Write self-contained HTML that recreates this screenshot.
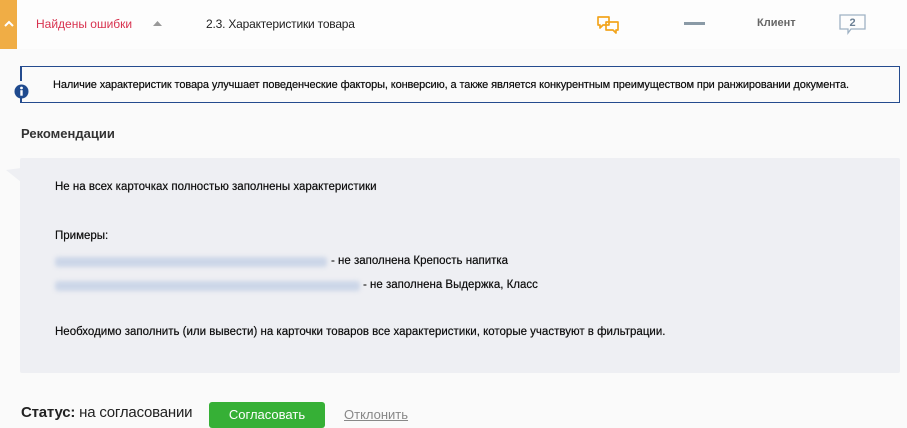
<!DOCTYPE html>
<html><head><meta charset="utf-8"><style>
*{margin:0;padding:0;box-sizing:border-box}
body{width:907px;height:426px;background:#fafafa;font-family:"Liberation Sans",sans-serif;position:relative;overflow:hidden;color:#222}
.a{position:absolute;white-space:nowrap}
.hdr{position:absolute;left:0;top:0;width:907px;height:49px;background:#fdfdfd}
.tab{position:absolute;left:0;top:0;width:17px;height:49px;background:#f0ad45}
.info{position:absolute;left:20px;top:66px;width:880px;height:37px;border:1.5px solid #244b8e;border-left:none}
.info:before{content:"";position:absolute;left:0;top:0;width:1.5px;height:14px;background:#244b8e}
.info:after{content:"";position:absolute;left:0;bottom:0;width:1.5px;height:4px;background:#244b8e}
.box{position:absolute;left:20px;top:158px;width:880px;height:215px;background:#eeeff3;border-radius:2px}
.blur{position:absolute;height:10px;background:#ccd6e8;filter:blur(2px);border-radius:3px}
.f13{font-size:11.5px;color:#111;text-shadow:0 0 0.4px #111}
</style></head><body>
<div class="hdr"></div>
<div class="tab"></div>
<svg class="a" style="left:4px;top:20px" width="10" height="8"><path d="M1 6 L5 2 L9 6" stroke="#fff" stroke-width="2" fill="none"/></svg>
<div class="a" style="left:36px;top:17px;font-size:12px;color:#d8324f">Найдены ошибки</div>
<svg class="a" style="left:153px;top:21px" width="9" height="6"><path d="M0 5 L4.5 0 L9 5Z" fill="#999"/></svg>
<div class="a" style="left:206px;top:17px;font-size:12px;color:#222;letter-spacing:-0.2px">2.3. Характеристики товара</div>
<svg class="a" style="left:597px;top:16px" width="24" height="19"><path d="M1 1 H12 V9 H6 L3 12 V9 H1Z M9 6 H21 V14 H19 V17 L16 14 H9Z" stroke="#f2a51e" stroke-width="1.7" fill="#fdfdfd" stroke-linejoin="round"/></svg>
<div class="a" style="left:684px;top:22px;width:21px;height:3px;background:#8a9aa6"></div>
<div class="a" style="left:757px;top:17px;font-size:11px;font-weight:bold;color:#666">Клиент</div>
<svg class="a" style="left:839px;top:14px" width="28" height="22"><path d="M1 1 H26 V15 H12 L9 19 V15 H1Z" stroke="#9fb2c4" stroke-width="1.3" fill="#fdfdfd"/><text x="13.5" y="12" text-anchor="middle" font-family="Liberation Sans" font-size="11" font-weight="bold" fill="#6a7f94">2</text></svg>
<div class="info"></div>
<svg class="a" style="left:14px;top:84px" width="15" height="15"><circle cx="7.5" cy="7.5" r="7" fill="#1f4a8e"/><circle cx="7.5" cy="4" r="1.4" fill="#fff"/><rect x="6.3" y="6.2" width="2.4" height="5.5" fill="#fff"/></svg>
<div class="a" style="left:53px;top:79px;font-size:11px;color:#111;letter-spacing:-0.12px;text-shadow:0 0 0.4px #111">Наличие характеристик товара улучшает поведенческие факторы, конверсию, а также является конкурентным преимуществом при ранжировании документа.</div>
<div class="a" style="left:21px;top:126px;font-size:13px;font-weight:bold;color:#333">Рекомендации</div>
<svg class="a" style="left:5px;top:158px" width="16" height="24"><path d="M16 10 L1 12 L16 24Z" fill="#eeeff3"/></svg>
<div class="box"></div>
<div class="a f13" style="left:55px;top:181px">Не на всех карточках полностью заполнены характеристики</div>
<div class="a f13" style="left:55px;top:230px">Примеры:</div>
<div class="blur" style="left:55px;top:257px;width:272px"></div>
<div class="a f13" style="left:331px;top:255px">- не заполнена Крепость напитка</div>
<div class="blur" style="left:55px;top:281px;width:305px"></div>
<div class="a f13" style="left:363px;top:279px">- не заполнена Выдержка, Класс</div>
<div class="a f13" style="left:55px;top:326px">Необходимо заполнить (или вывести) на карточки товаров все характеристики, которые участвуют в фильтрации.</div>
<div class="a" style="left:21px;top:404px;font-size:15px;color:#222;letter-spacing:-0.2px"><b>Статус:</b> на согласовании</div>
<div class="a" style="left:209px;top:402px;width:116px;height:26px;background:#36b036;border-radius:3px;color:#fff;font-size:13px;text-align:center;line-height:26px">Согласовать</div>
<div class="a" style="left:344px;top:407px;font-size:13px;color:#888;text-decoration:underline">Отклонить</div>
</body></html>
